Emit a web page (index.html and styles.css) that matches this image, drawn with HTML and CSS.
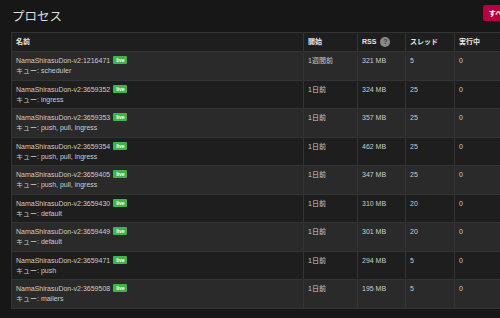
FILE: index.html
```html
<!DOCTYPE html>
<html lang="ja">
<head>
    <meta charset="UTF-8">
    <title>プロセス</title>
    <link rel="stylesheet" href="styles.css">
</head>
<body>
<div class="page">
    <div class="header">
        <h3>プロセス</h3>
        <button class="btn-danger">すべて停止</button>
    </div>

    <table class="processes">
        <thead>
            <tr>
                <th class="col-name">名前</th>
                <th class="col-start">開始</th>
                <th class="col-rss">RSS <span class="help">?</span></th>
                <th class="col-threads">スレッド</th>
                <th class="col-busy">実行中</th>
            </tr>
        </thead>
        <tbody>
            <tr>
                <td>NamaShirasuDon-v2:1216471 <span class="label">live</span><br>キュー: scheduler</td>
                <td>1週間前</td><td>321 MB</td><td>5</td><td>0</td>
            </tr>
            <tr>
                <td>NamaShirasuDon-v2:3659352 <span class="label">live</span><br>キュー: ingress</td>
                <td>1日前</td><td>324 MB</td><td>25</td><td>0</td>
            </tr>
            <tr>
                <td>NamaShirasuDon-v2:3659353 <span class="label">live</span><br>キュー: push, pull, ingress</td>
                <td>1日前</td><td>357 MB</td><td>25</td><td>0</td>
            </tr>
            <tr>
                <td>NamaShirasuDon-v2:3659354 <span class="label">live</span><br>キュー: push, pull, ingress</td>
                <td>1日前</td><td>462 MB</td><td>25</td><td>0</td>
            </tr>
            <tr>
                <td>NamaShirasuDon-v2:3659405 <span class="label">live</span><br>キュー: push, pull, ingress</td>
                <td>1日前</td><td>347 MB</td><td>25</td><td>0</td>
            </tr>
            <tr>
                <td>NamaShirasuDon-v2:3659430 <span class="label">live</span><br>キュー: default</td>
                <td>1日前</td><td>310 MB</td><td>20</td><td>0</td>
            </tr>
            <tr>
                <td>NamaShirasuDon-v2:3659449 <span class="label">live</span><br>キュー: default</td>
                <td>1日前</td><td>301 MB</td><td>20</td><td>0</td>
            </tr>
            <tr>
                <td>NamaShirasuDon-v2:3659471 <span class="label">live</span><br>キュー: push</td>
                <td>1日前</td><td>294 MB</td><td>5</td><td>0</td>
            </tr>
            <tr>
                <td>NamaShirasuDon-v2:3659508 <span class="label">live</span><br>キュー: mailers</td>
                <td>1日前</td><td>195 MB</td><td>5</td><td>0</td>
            </tr>
        </tbody>
    </table>
</div>
</body>
</html>
```

FILE: styles.css
```css
html, body {
    margin: 0;
    height: 100%;
    overflow: hidden;
}

body {
    background-color: #171717;
    color: #cccccc;
    font-family: "Liberation Sans", Arial, "Noto Sans CJK JP", sans-serif;
    font-size: 7px;
}

.page {
    width: 519px;
    padding: 5px 0 0 11px;
}

/* Title row with the stop button */
.header {
    display: flex;
    justify-content: space-between;
    align-items: flex-start;
    height: 27px;
}

.header h3 {
    margin: 2px 0 0 1px;
    font-family: "Noto Sans CJK JP", sans-serif;
    font-size: 12.5px;
    font-weight: normal;
    line-height: 18px;
    color: #dedede;
}

.btn-danger {
    background-color: #b8003e;
    color: #fff;
    border: none;
    border-radius: 2px;
    height: 16px;
    margin-right: 1px;
    padding: 0 6px;
    font-family: "Noto Sans CJK JP", sans-serif;
    font-size: 7px;
    font-weight: bold;
}

/* Process table */
.processes {
    width: 100%;
    border-collapse: collapse;
    border: 1px solid #333;
}

.processes th,
.processes td {
    border: 1px solid #333;
    text-align: left;
    vertical-align: top;
    line-height: 10px;
}

.processes th {
    padding: 4px 4px 4px;
    font-weight: bold;
    color: #e6e6e6;
    background-color: #1e1e1e;
}

.processes td {
    padding: 4px 4px 3.5px;
}

.processes tbody tr:nth-child(odd) td {
    background-color: #2a2a2a;
}

.processes tbody tr:nth-child(even) td {
    background-color: #1e1e1e;
}

.col-name { width: 283px; }
.col-start { width: 45px; }
.col-rss { width: 39px; }
.col-threads { width: 40px; }

.label {
    display: inline-block;
    background-color: #3db54a;
    color: #fff;
    font-size: 5px;
    font-weight: bold;
    line-height: 8px;
    padding: 0 3px;
    border-radius: 1px;
    margin-left: 1px;
    vertical-align: 1px;
}

.help {
    display: inline-block;
    width: 10px;
    height: 10px;
    border-radius: 50%;
    background-color: #8a8a8a;
    color: #3a3a3a;
    text-align: center;
    font-size: 7px;
    line-height: 10px;
    margin-left: 2px;
    vertical-align: top;
}
```
